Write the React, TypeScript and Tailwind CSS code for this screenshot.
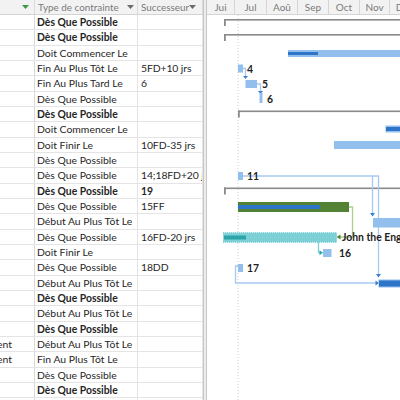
type Row = { c1?: string; type: string; succ?: string; bold?: boolean };

const ROWS: Row[] = [
  { type: 'Dès Que Possible', bold: true },
  { type: 'Dès Que Possible', bold: true },
  { type: 'Doit Commencer Le' },
  { type: 'Fin Au Plus Tôt Le', succ: '5FD+10 jrs' },
  { type: 'Fin Au Plus Tard Le', succ: '6' },
  { type: 'Dès Que Possible' },
  { type: 'Dès Que Possible', bold: true },
  { type: 'Doit Commencer Le' },
  { type: 'Doit Finir Le', succ: '10FD-35 jrs' },
  { type: 'Dès Que Possible' },
  { type: 'Dès Que Possible', succ: '14;18FD+20 jrs' },
  { type: 'Dès Que Possible', succ: '19', bold: true },
  { type: 'Dès Que Possible', succ: '15FF' },
  { type: 'Début Au Plus Tôt Le' },
  { type: 'Dès Que Possible', succ: '16FD-20 jrs' },
  { type: 'Doit Finir Le' },
  { type: 'Dès Que Possible', succ: '18DD' },
  { type: 'Début Au Plus Tôt Le' },
  { type: 'Dès Que Possible', bold: true },
  { type: 'Début Au Plus Tôt Le' },
  { type: 'Dès Que Possible', bold: true },
  { c1: 'ent', type: 'Début Au Plus Tôt Le' },
  { c1: 'ent', type: 'Fin Au Plus Tôt Le' },
  { type: 'Dès Que Possible' },
  { type: 'Dès Que Possible', bold: true },
  { type: 'Dès Que Possible' },
];

const MONTHS: { label: string; w: string }[] = [
  { label: 'Jui', w: 'w-[28px]' },
  { label: 'Jul', w: 'w-[32px]' },
  { label: 'Aoû', w: 'w-[31px]' },
  { label: 'Sep', w: 'w-[31px]' },
  { label: 'Oct', w: 'w-[31px]' },
  { label: 'Nov', w: 'w-[30px]' },
  { label: 'Déc', w: 'w-[30px]' },
];

const LIGHT = '#92bfec';
const DARK = '#2e75c9';
const LINK = '#a6c9ef';
const ARROW = '#3b80d2';
const LABEL = { fontSize: 10.4, fontWeight: 700, fill: '#222' };

function Caret({ color = '#6b6b6b' }: { color?: string }) {
  return (
    <svg width="7" height="4" viewBox="0 0 7 4" className="shrink-0">
      <polygon points="0,0 7,0 3.5,4" fill={color} />
    </svg>
  );
}

function Table() {
  return (
    <div className="w-[203px] shrink-0 overflow-hidden">
      <div className="grid h-[15px] grid-cols-[35px_103px_65px] border-b border-[#d4d4d4] bg-[#f2f2f2] text-[9.9px] leading-[14px] text-[#7a7a7a]">
        <div className="flex items-center justify-end border-r border-[#dadada] pr-[5px]">
          <Caret color="#3a9a4a" />
        </div>
        <div className="flex items-center justify-between border-r border-[#dadada] pl-[3px] pr-[3px]">
          <span className="whitespace-nowrap">Type de contrainte</span>
          <Caret />
        </div>
        <div className="flex items-center pl-[3px]">
          <span className="w-[48px] overflow-hidden whitespace-nowrap">Successeurs</span>
          <Caret />
          <span className="ml-[6px] h-full border-l border-[#dadada]" />
        </div>
      </div>
      {ROWS.map((r, i) => (
        <div
          key={i}
          className="grid h-[15.33px] grid-cols-[35px_103px_65px] border-b border-[#e4e4e4] text-[10.4px] leading-[14px] text-[#262626]"
        >
          <div className="flex items-center justify-end overflow-hidden border-r border-[#d9d9d9]">
            <span className="whitespace-nowrap pr-[22px]">{r.c1}</span>
          </div>
          <div className={`flex items-center overflow-hidden whitespace-nowrap border-r border-[#e4e4e4] pl-[2px] ${r.bold ? 'font-bold' : ''}`}>
            {r.type}
          </div>
          <div className={`flex items-center overflow-hidden whitespace-nowrap border-r border-[#e4e4e4] pl-[3px] tracking-[-0.1px] ${r.succ === '19' ? 'font-bold' : ''}`}>
            {r.succ}
          </div>
        </div>
      ))}
    </div>
  );
}

function Gantt() {
  return (
    <div className="w-[193px] shrink-0 overflow-hidden">
      <div className="flex h-[15px] border-b border-[#d4d4d4] bg-[#f2f2f2] text-[10px] leading-[14px] text-[#7a7a7a]">
        {MONTHS.map((m) => (
          <div key={m.label} className={`${m.w} shrink-0 border-r border-[#d6d6d6] text-center`}>
            {m.label}
          </div>
        ))}
      </div>
      <svg width="193" height="385" viewBox="207 15 193 385" className="block" style={{ fontFamily: 'Lato, "Liberation Sans", sans-serif' }}>
        <line x1="238" y1="15" x2="238" y2="400" stroke="#cfcfcf" strokeDasharray="1 2" />

        {/* summary brackets */}
        <rect x="224" y="19" width="176" height="1.6" fill="#8a8a8a" />
        <rect x="224" y="19" width="1.8" height="7" fill="#8a8a8a" />
        <rect x="224" y="34" width="176" height="1.6" fill="#8a8a8a" />
        <rect x="224" y="34" width="1.8" height="7" fill="#8a8a8a" />
        <rect x="238" y="110.5" width="162" height="1.6" fill="#8a8a8a" />
        <rect x="238" y="110.5" width="1.8" height="7" fill="#8a8a8a" />
        <rect x="224" y="187.5" width="176" height="1.6" fill="#8a8a8a" />
        <rect x="224" y="187.5" width="1.8" height="7" fill="#8a8a8a" />

        {/* row 3 */}
        <rect x="288" y="50" width="112" height="7" fill={LIGHT} />
        <rect x="288" y="52" width="30" height="3" fill={DARK} />

        {/* 4 -> 5 -> 6 */}
        <rect x="238" y="64.5" width="5" height="8" fill={LIGHT} />
        <path d="M243 68.5 H245.5 V77" fill="none" stroke={LINK} strokeWidth="1.3" />
        <polygon points="243,76 248,76 245.5,79" fill={ARROW} />
        <rect x="245.5" y="80" width="11.5" height="8" fill={LIGHT} />
        <path d="M257 84 H260.5 V92" fill="none" stroke={LINK} strokeWidth="1.3" />
        <polygon points="258,91 263,91 260.5,94" fill={ARROW} />
        <rect x="259.5" y="93" width="3" height="10" fill={LIGHT} />
        <text x="247" y="72.5" {...LABEL}>4</text>
        <text x="262" y="88" {...LABEL}>5</text>
        <text x="267" y="102.5" {...LABEL}>6</text>

        {/* rows 8, 9 */}
        <rect x="385.5" y="125.5" width="15" height="7" fill={LIGHT} />
        <rect x="386" y="127" width="14" height="4" fill={DARK} />
        <rect x="334" y="141" width="66" height="8" fill={LIGHT} />

        {/* 11 links */}
        <path d="M243 176 H378.5 V275" fill="none" stroke={LINK} strokeWidth="1.3" />
        <path d="M372.5 176 V214" fill="none" stroke={LINK} strokeWidth="1.3" />
        <polygon points="370,213 375,213 372.5,216.5" fill={ARROW} />
        <rect x="238" y="172" width="5" height="8" fill={LIGHT} />
        <text x="247" y="180" {...LABEL}>11</text>

        {/* row 13 green */}
        <rect x="238" y="202" width="111" height="10" fill="#548235" />
        <rect x="238" y="205" width="82" height="4" fill={DARK} />
        <path d="M349 207 H352.5 V237 H340" fill="none" stroke="#a9d08e" strokeWidth="1.3" />
        <polygon points="340.5,234.5 340.5,239.5 336.5,237" fill="#548235" />

        {/* row 14 */}
        <rect x="373" y="218" width="27" height="9.5" fill={LIGHT} />

        {/* row 15 teal */}
        <rect x="223" y="232.5" width="114" height="10" fill="#a6e0e5" />
        <rect x="223.5" y="233.5" width="113" height="8" fill="#7ed0d7" />
        <line x1="223" y1="233" x2="337" y2="233" stroke="#4fbcc4" strokeWidth="1" strokeDasharray="1 1" />
        <line x1="223" y1="242" x2="337" y2="242" stroke="#4fbcc4" strokeWidth="1" strokeDasharray="1 1" />
        <rect x="224" y="235.5" width="22" height="4" fill="#2ba5aa" />
        <text x="342" y="241" {...LABEL}>John the Engineer</text>
        <path d="M318.5 242 V252.7 H320" fill="none" stroke="#7ed0d7" strokeWidth="1.3" />
        <polygon points="319.5,250.2 319.5,255.2 323,252.7" fill="#2ba5aa" />

        {/* row 16 */}
        <rect x="323" y="249" width="8.5" height="8" fill={LIGHT} />
        <text x="339" y="257" {...LABEL}>16</text>

        {/* row 17 -> 18 */}
        <rect x="238" y="264" width="5" height="8" fill={LIGHT} />
        <text x="247" y="272" {...LABEL}>17</text>
        <path d="M238 266 H235.5 V283 H376" fill="none" stroke={LINK} strokeWidth="1.3" />
        <polygon points="375.5,280.5 375.5,285.5 379,283" fill={ARROW} />
        <polygon points="376,274 381,274 378.5,277.5" fill={ARROW} />
        <rect x="378.5" y="279.5" width="22" height="8" fill={LIGHT} />
        <rect x="379" y="280.5" width="21" height="6" fill={DARK} />
      </svg>
    </div>
  );
}

export default function App() {
  return (
    <div className="flex h-[400px] w-[400px] overflow-hidden bg-white" style={{ fontFamily: 'Lato, "Liberation Sans", sans-serif' }}>
      <Table />
      <div className="w-[4px] shrink-0 border-l border-r border-[#c8c8c8] bg-[#ececec]" />
      <Gantt />
    </div>
  );
}
